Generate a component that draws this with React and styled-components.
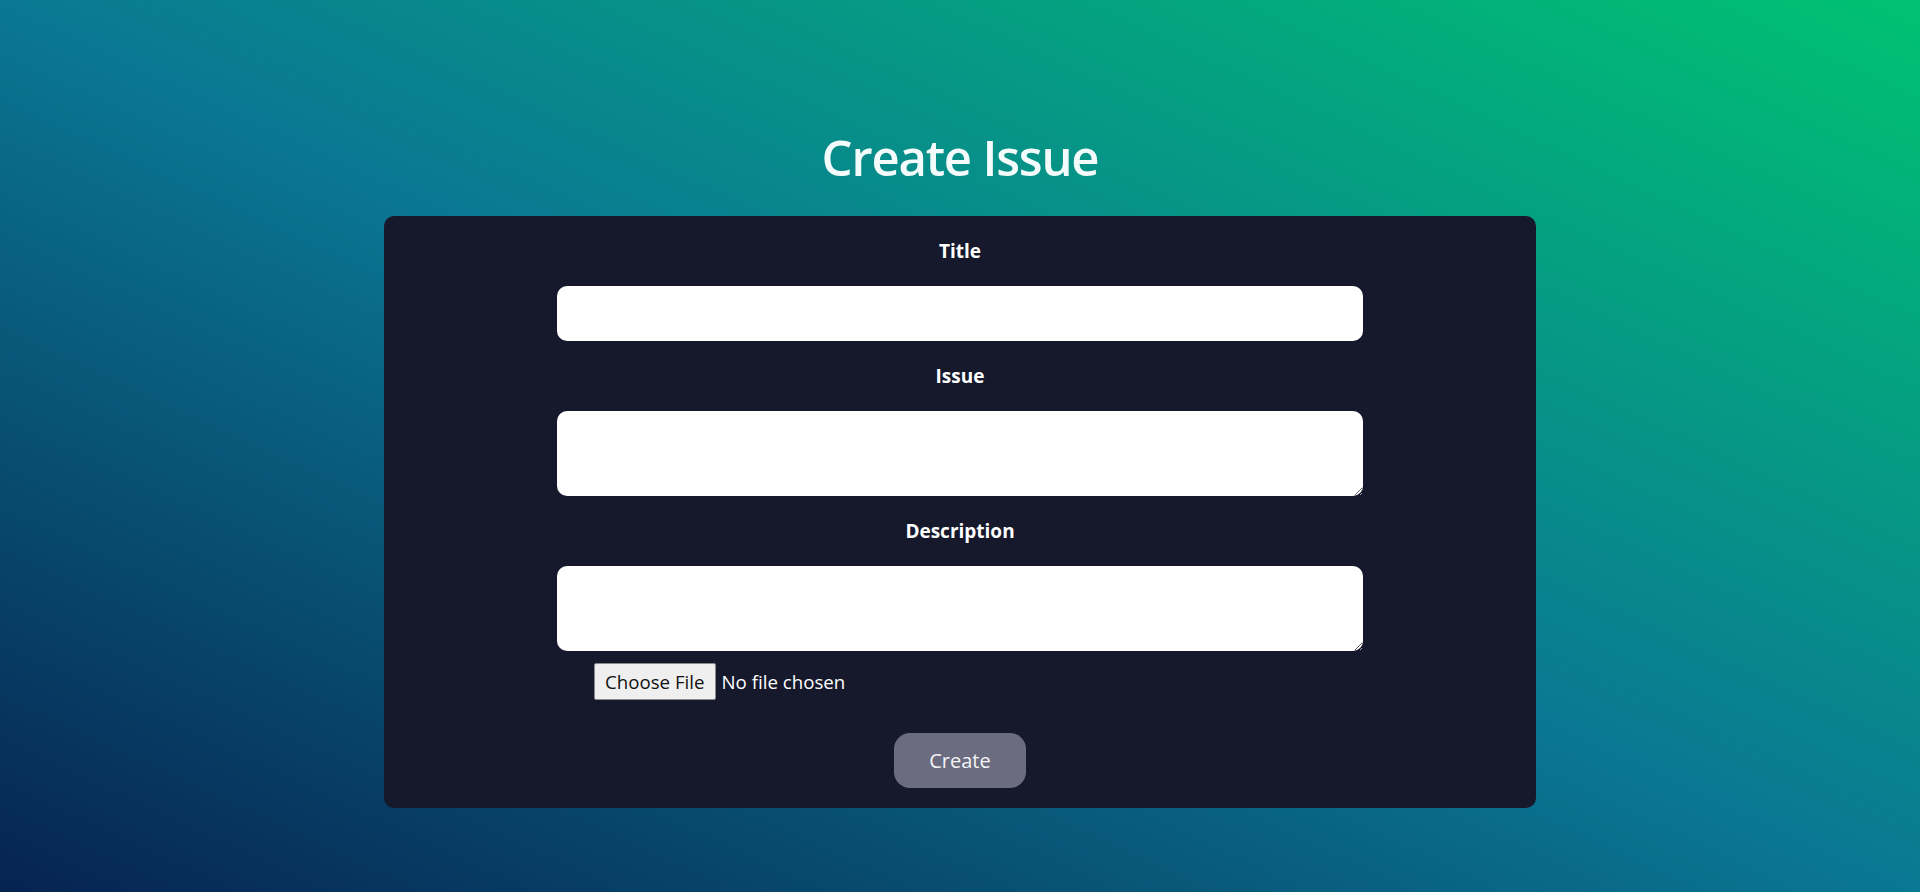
import React from "react";
import styled, { createGlobalStyle } from "styled-components";

const Global = createGlobalStyle`
  html, body { margin: 0; padding: 0; }
  body {
    min-height: 100vh;
    font-family: "Open Sans", "Noto Sans", sans-serif;
    background: linear-gradient(to top right, #062350 0%, #0a7893 50%, #00c272 100%);
    background-attachment: fixed;
  }
`;

const Page = styled.main`
  min-height: 100vh;
  box-sizing: border-box;
  display: flex;
  flex-direction: column;
  align-items: center;
  padding-top: 127px;
`;

const Heading = styled.h1`
  margin: 0 0 29px;
  font-size: 49px;
  line-height: 60px;
  font-weight: 600;
  letter-spacing: -1.2px;
  color: #f3fbfb;
`;

const Card = styled.form`
  width: 1152px;
  box-sizing: border-box;
  background: #16192c;
  border-radius: 10px;
  padding: 22.5px 0 20px;
  display: flex;
  flex-direction: column;
  align-items: center;
`;

const Fields = styled.div`
  display: flex;
  flex-direction: column;
  align-items: center;
  gap: 23px;
`;

const Label = styled.label`
  font-size: 19px;
  line-height: 24px;
  font-weight: 700;
  color: #ffffff;
`;

const TextInput = styled.input`
  width: 806px;
  height: 55px;
  box-sizing: border-box;
  border: none;
  border-radius: 10px;
  background: #ffffff;
  padding: 0 37px;
  font-family: inherit;
  font-size: 20px;
  outline: none;
`;

const TextArea = styled.textarea`
  width: 806px;
  height: 85px;
  box-sizing: border-box;
  border: none;
  border-radius: 10px;
  background: #ffffff;
  padding: 14px 37px;
  font-family: inherit;
  font-size: 20px;
  line-height: 1.35;
  outline: none;
  display: block;
`;

const FileRow = styled.div`
  width: 806px;
  box-sizing: border-box;
  padding-left: 37px;
  margin-top: 12.5px;
  display: flex;
`;

const FileInput = styled.input`
  font-family: inherit;
  font-size: 18.7px;
  color: #ffffff;
  &::file-selector-button {
    font: inherit;
    color: #111;
    height: 37px;
    padding: 0 10px;
    margin-right: 6px;
    border: 1px solid #8a8a8a;
    border-radius: 2px;
    background: #efefef;
  }
`;

const Submit = styled.button`
  margin-top: 32.5px;
  width: 132px;
  height: 55px;
  border: none;
  border-radius: 16px;
  background: #6b6c80;
  color: #f4f4f6;
  font-family: inherit;
  font-size: 20px;
  cursor: pointer;
`;

export default function App() {
  return (
    <>
      <Global />
      <Page>
        <Heading>Create Issue</Heading>
        <Card onSubmit={(e) => e.preventDefault()}>
          <Fields>
            <Label htmlFor="title">Title</Label>
            <TextInput id="title" type="text" />
            <Label htmlFor="issue">Issue</Label>
            <TextArea id="issue" autoFocus />
            <Label htmlFor="description">Description</Label>
            <TextArea id="description" />
          </Fields>
          <FileRow>
            <FileInput type="file" />
          </FileRow>
          <Submit type="submit">Create</Submit>
        </Card>
      </Page>
    </>
  );
}
